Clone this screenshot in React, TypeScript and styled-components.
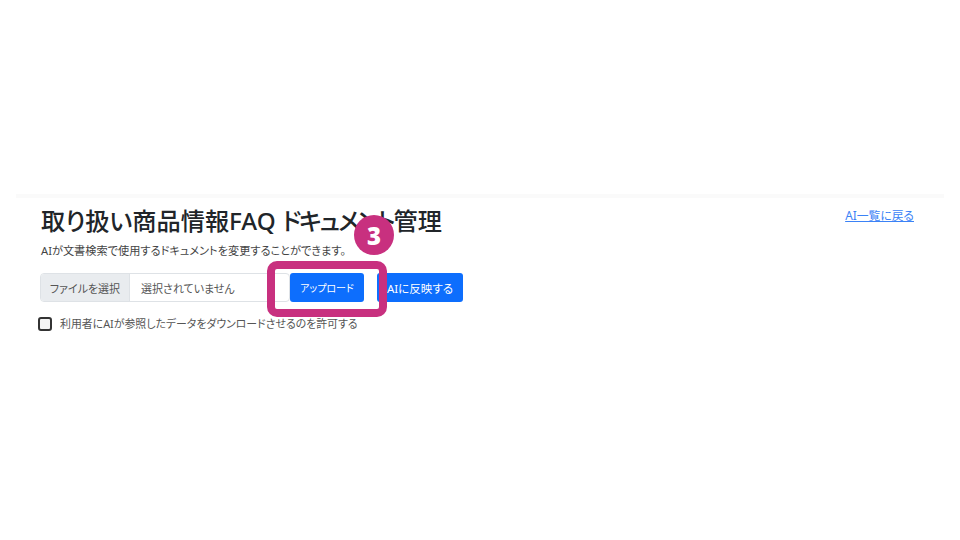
import React from "react";
import styled, { createGlobalStyle } from "styled-components";

const GlobalStyle = createGlobalStyle`
  html, body {
    margin: 0;
    padding: 0;
    background: #fff;
    font-family: "Noto Sans", "Noto Sans CJK JP", sans-serif;
    font-feature-settings: "palt";
    color: #212529;
  }
`;

const Page = styled.div`
  width: 960px;
  height: 540px;
  padding: 194px 16px 0;
  box-sizing: border-box;
  overflow: hidden;
  position: relative;
`;

const Band = styled.div`
  height: 4px;
  background: #fafafa;
`;

const Content = styled.div`
  padding: 5px 30px 0 24px;
`;

const HeaderRow = styled.div`
  display: flex;
  justify-content: space-between;
  align-items: flex-start;
`;

const Title = styled.h1`
  margin: 0 0 0 1px;
  font-size: 24.2px;
  line-height: 36px;
  font-weight: 500;
  color: #212529;
`;

const TitleKana = styled.span`
  letter-spacing: -2px;
`;

const BackLink = styled.a`
  font-size: 11.8px;
  line-height: 18px;
  margin-top: 3px;
  color: #3b82f6;
  text-decoration: underline;
`;

const Lead = styled.p`
  margin: 4px 0 0 1px;
  font-size: 11.2px;
  line-height: 16px;
  color: #444;
`;

const ActionRow = styled.div`
  display: flex;
  align-items: center;
  margin-top: 14px;
`;

const FilePicker = styled.div`
  display: flex;
  width: 250px;
  height: 29px;
  box-sizing: border-box;
  border: 1px solid #dee2e6;
  border-radius: 4px;
  overflow: hidden;
  font-size: 11px;
`;

const FileButton = styled.div`
  display: flex;
  align-items: center;
  width: 89px;
  box-sizing: border-box;
  justify-content: center;
  background: #e9ecef;
  border-right: 1px solid #dee2e6;
  color: #555;
`;

const FileName = styled.div`
  display: flex;
  align-items: center;
  padding: 0 11px;
  color: #555;
`;

const PrimaryButton = styled.button<{ $gap: number; $width: number; $size: number }>`
  height: 29px;
  width: ${(p) => p.$width}px;
  margin-left: ${(p) => p.$gap}px;
  padding: 0;
  border: none;
  border-radius: 3px;
  background: #0d6efd;
  color: #fff;
  font: inherit;
  font-size: ${(p) => p.$size}px;
  white-space: nowrap;
`;

const ConsentRow = styled.label`
  display: flex;
  align-items: center;
  gap: 8px;
  margin-top: 13px;
  margin-left: -2px;
  font-size: 10.9px;
  line-height: 18px;
  color: #555;
`;

const Check = styled.span`
  width: 14px;
  height: 14px;
  box-sizing: border-box;
  border: 2px solid #333;
  border-radius: 3px;
  background: #f4f4f4;
`;

const Highlight = styled.div`
  position: absolute;
  left: 267px;
  top: 261px;
  width: 120px;
  height: 56px;
  box-sizing: border-box;
  border: 8px solid #c8307f;
  border-radius: 10px;
`;

const Badge = styled.div`
  position: absolute;
  left: 354px;
  top: 215px;
  width: 40px;
  height: 40px;
  border-radius: 50%;
  background: #c8307f;
  color: #fff;
  display: flex;
  align-items: center;
  justify-content: center;
  font-size: 24px;
  font-weight: 800;
  font-family: "Open Sans", sans-serif;
`;

export default function App() {
  return (
    <Page>
      <GlobalStyle />
      <Band />
      <Content>
        <HeaderRow>
          <Title>
            取り扱い商品情報FAQ <TitleKana>ドキュメント</TitleKana>管理
          </Title>
          <BackLink href="#">AI一覧に戻る</BackLink>
        </HeaderRow>
        <Lead>AIが文書検索で使用するドキュメントを変更することができます。</Lead>
        <ActionRow>
          <FilePicker>
            <FileButton>ファイルを選択</FileButton>
            <FileName>選択されていません</FileName>
          </FilePicker>
          <PrimaryButton $gap={0} $width={74} $size={10}>アップロード</PrimaryButton>
          <PrimaryButton $gap={13} $width={86} $size={11.5}>AIに反映する</PrimaryButton>
        </ActionRow>
        <ConsentRow>
          <Check />
          利用者にAIが参照したデータをダウンロードさせるのを許可する
        </ConsentRow>
      </Content>
      <Highlight />
      <Badge>3</Badge>
    </Page>
  );
}
